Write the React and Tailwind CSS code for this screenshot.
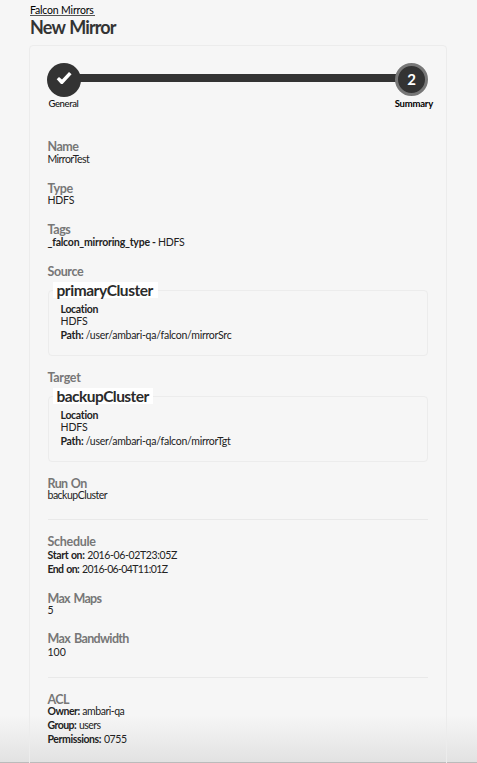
function Label({ children, className = "" }) {
  return <h3 className={`h-[11.5px] whitespace-nowrap text-[12.5px] leading-[11.5px] font-bold text-[#777] ${className}`}>{children}</h3>;
}

function Line({ label, value, className = "" }) {
  return (
    <p className={`h-3.5 whitespace-nowrap leading-[13px] ${className}`}>
      {label && <b>{label} </b>}
      {value}
    </p>
  );
}

function Field({ title, titleClass, children }) {
  return (
    <section className="mb-4">
      <Label className={titleClass}>{title}</Label>
      {children}
    </section>
  );
}

function Cluster({ name, nameClass, path }) {
  return (
    <div className="mt-[12.5px] h-[66px] rounded-[4px] border border-[#ececec] pl-1">
      <h2 className={`-mt-[9px] flex h-4 items-center bg-white pl-1 text-[15.5px] leading-4 font-bold text-[#2b2b2b] ${nameClass}`}>{name}</h2>
      <div className="pt-[5px] pl-2">
        <p className="h-3 leading-3 tracking-[-0.3px]"><b>Location</b></p>
        <p className="h-[13px] leading-3 tracking-[-0.1px]">HDFS</p>
        <Line label="Path:" value={path} className="pt-px tracking-[-0.26px]" />
      </div>
    </div>
  );
}

function Stepper() {
  return (
    <div className="relative h-[94px]">
      <div className="absolute top-[27px] right-8 left-4 h-2 bg-[#333]" />
      <div className="absolute top-4 -left-px flex h-[34px] w-[34px] items-center justify-center rounded-full bg-[#333]">
        <svg viewBox="0 0 16 14" className="-mt-1 h-3.5 w-4 fill-white">
          <path d="M.7 8.2 3 5.9l3 2.6L13 1l2.6 2.3-9 9.7H5Z" />
        </svg>
      </div>
      <div className="absolute top-4 right-0 flex h-[33px] w-[33px] items-center justify-center rounded-full border-[3px] border-[#777] bg-[#333] text-[15px] font-bold text-white">2</div>
      <span className="absolute top-[50px] left-px text-[9.5px] leading-3.5 font-medium tracking-[-0.4px] text-[#111]">General</span>
      <span className="absolute top-[50px] -right-[5px] text-[9.5px] leading-3.5 font-bold tracking-[-0.2px] text-black">Summary</span>
    </div>
  );
}

export default function App() {
  return (
    <div className="relative h-[763px] overflow-hidden bg-[#f6f6f6] font-[Lato,sans-serif] text-[10.5px] text-[#222]">
      <div className="absolute inset-x-0 bottom-0 h-12 border-b border-[#bbb] bg-linear-to-b from-transparent to-[#e2e2e2]" />
      <div className="relative pt-1 pl-[30px]">
        <a className="block h-[12px] w-[65px] border-b border-[#555] text-[10.5px] leading-[13px] tracking-[-0.18px] whitespace-nowrap text-black">Falcon Mirrors</a>
        <h1 className="h-[21px] text-[18px] leading-[22px] font-bold tracking-[-0.85px] [word-spacing:1px] text-[#333]">New Mirror</h1>
      </div>
      <main className="relative mt-[8px] ml-[29px] h-[740px] w-[418px] rounded-t-[4px] border border-[#ececec] pt-px pr-[18px] pl-[17.5px]">
        <Stepper />
        <Field title="Name" titleClass="tracking-[-0.5px]"><Line value="MirrorTest" className="tracking-[-0.55px]" /></Field>
        <Field title="Type" titleClass="tracking-[-0.4px]"><Line value="HDFS" className="tracking-[-0.2px]" /></Field>
        <Field title="Tags" titleClass="tracking-[-0.4px]"><Line label="_falcon_mirroring_type -" value="HDFS" className="tracking-[-0.24px]" /></Field>
        <Field title="Source" titleClass="tracking-[-0.4px]">
          <Cluster name="primaryCluster" nameClass="w-[105px] tracking-[-0.45px]" path="/user/ambari-qa/falcon/mirrorSrc" />
        </Field>
        <Field title="Target" titleClass="tracking-[-0.3px]">
          <Cluster name="backupCluster" nameClass="w-[100px] tracking-[-0.55px]" path="/user/ambari-qa/falcon/mirrorTgt" />
        </Field>
        <Field title="Run On" titleClass="tracking-[-0.65px] [word-spacing:1px]"><Line value="backupCluster" className="tracking-[-0.5px]" /></Field>
        <hr className="mt-4 mb-4 border-[#e9e9e9]" />
        <Field title="Schedule" titleClass="tracking-[-0.3px]">
          <Line label="Start on:" value="2016-06-02T23:05Z" className="pt-px tracking-[-0.37px] [word-spacing:0.5px]" />
          <Line label="End on:" value="2016-06-04T11:01Z" className="pt-px tracking-[-0.63px] [word-spacing:1px]" />
        </Field>
        <Field title="Max Maps" titleClass="pt-px tracking-[-0.75px] [word-spacing:1.5px]"><Line value="5" className="pt-px" /></Field>
        <Field title="Max Bandwidth" titleClass="tracking-[-0.65px] [word-spacing:1.5px]"><Line value="100" className="pt-px" /></Field>
        <hr className="mt-[18px] mb-4 border-[#e9e9e9]" />
        <Field title="ACL" titleClass="tracking-[-0.6px]">
          <Line label="Owner:" value="ambari-qa" className="tracking-[-0.48px] [word-spacing:0.6px]" />
          <Line label="Group:" value="users" className="tracking-[-0.55px] [word-spacing:0.8px]" />
          <Line label="Permissions:" value="0755" className="tracking-[-0.4px] [word-spacing:0.6px]" />
        </Field>
      </main>
    </div>
  );
}
